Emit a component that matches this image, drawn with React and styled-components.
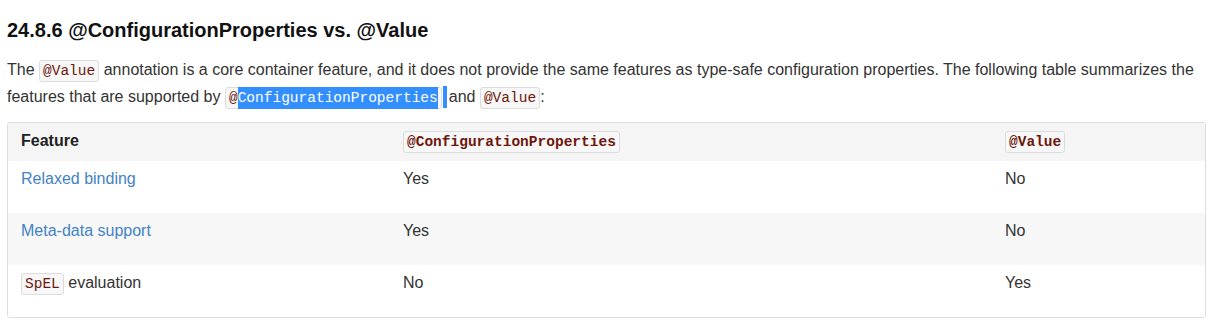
import styled, { createGlobalStyle } from "styled-components";

const GlobalStyle = createGlobalStyle`
  html, body {
    margin: 0;
    padding: 0;
    background: #fff;
  }
  body {
    font-family: "Liberation Sans", Arial, sans-serif;
    color: #333;
  }
`;

const rows = [
  { feature: "Relaxed binding", link: true, config: "Yes", value: "No" },
  { feature: "Meta-data support", link: true, config: "Yes", value: "No" },
  { feature: "evaluation", code: "SpEL", config: "No", value: "Yes" },
];

function App() {
  return (
    <>
      <GlobalStyle />
      <Page>
        <Title>24.8.6 @ConfigurationProperties vs. @Value</Title>
        <Text>
          The <Code>@Value</Code> annotation is a core container feature, and
          it does not provide the same features as type-safe configuration
          properties. The following table summarizes the features that are
          supported by{" "}
          <Code>
            @<Selected>ConfigurationProperties</Selected>
          </Code>
          <Caret />
          and <Code>@Value</Code>:
        </Text>
        <Table>
          <HeadRow>
            <Cell>
              <strong>Feature</strong>
            </Cell>
            <Cell>
              <Code $bold>@ConfigurationProperties</Code>
            </Cell>
            <Cell>
              <Code $bold>@Value</Code>
            </Cell>
          </HeadRow>
          {rows.map((row, i) => (
            <Row key={row.feature} $striped={i % 2 === 1}>
              <Cell>
                {row.link ? (
                  <FeatureLink href="#">{row.feature}</FeatureLink>
                ) : (
                  <>
                    <Code>{row.code}</Code> {row.feature}
                  </>
                )}
              </Cell>
              <Cell>{row.config}</Cell>
              <Cell>{row.value}</Cell>
            </Row>
          ))}
        </Table>
      </Page>
    </>
  );
}

export default App;

const Page = styled.div`
  width: 1199px;
  padding: 18px 0 0 7px;
`;

const Title = styled.h3`
  margin: 0 0 15px;
  font-size: 20px;
  line-height: 24px;
  font-weight: bold;
  color: #111;
`;

const Text = styled.p`
  margin: 0 0 11px;
  font-size: 16px;
  line-height: 25px;
`;

const Code = styled.code`
  font-family: "Liberation Mono", "DejaVu Sans Mono", monospace;
  font-size: 14.5px;
  font-weight: ${(p) => (p.$bold ? "bold" : "normal")};
  color: #6d180b;
  background: #f7f7f8;
  border: 1px solid #dcdcdc;
  border-radius: 3px;
  padding: 2px 3px;
`;

const Selected = styled.span`
  background: #338fff;
  color: #fff;
  padding: 3px 0;
`;

const Caret = styled.span`
  display: inline-block;
  width: 4px;
  height: 22px;
  margin: 0 2px 0 1px;
  vertical-align: -6px;
  background: #338fff;
`;

const Table = styled.div`
  border: 1px solid #ddd;
  border-radius: 3px;
  overflow: hidden;
  font-size: 16px;
  line-height: 25px;
`;

const Grid = styled.div`
  display: grid;
  grid-template-columns: 382px 602px 1fr;
`;

const HeadRow = styled(Grid)`
  height: 38px;
  padding-top: 5px;
  box-sizing: border-box;
  background: #f5f5f5;
  color: #222;
`;

const Row = styled(Grid)`
  height: 52px;
  padding-top: 5px;
  box-sizing: border-box;
  background: ${(p) => (p.$striped ? "#f7f7f7" : "#fff")};
`;

const Cell = styled.div`
  padding: 0 13px;
`;

const FeatureLink = styled.a`
  color: #4183c4;
  text-decoration: none;
`;
